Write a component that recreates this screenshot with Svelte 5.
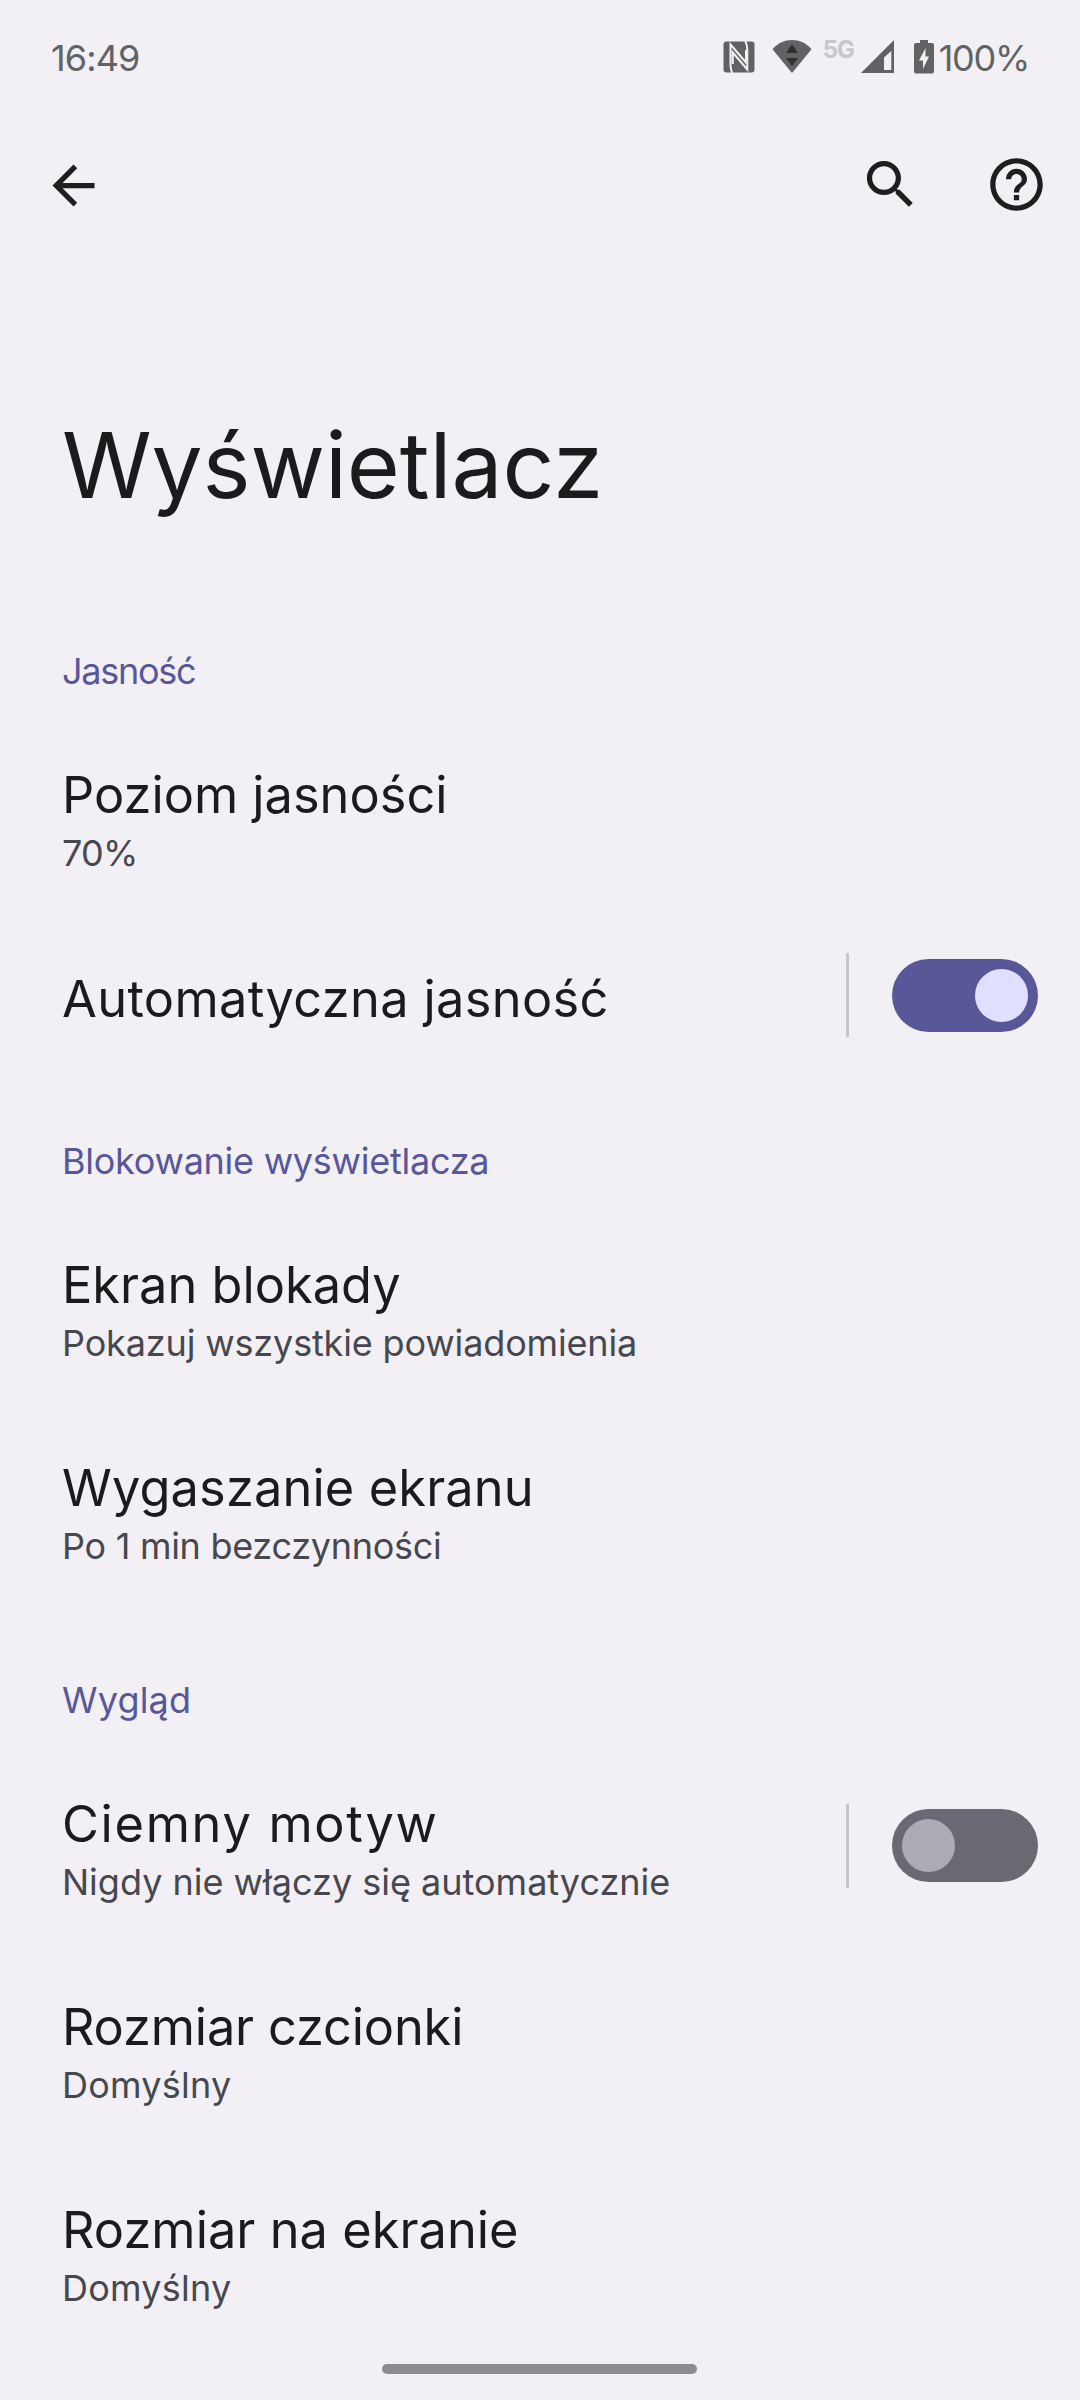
<script lang="ts">
	type Item = {
		title: string;
		titleSpacing?: number;
		summary?: string;
		summarySpacing?: number;
		toggle?: boolean;
		checked?: boolean;
	};

	type Group = {
		name: string;
		spacing: number;
		items: Item[];
	};

	let groups: Group[] = [
		{
			name: 'Jasność',
			spacing: -1.27,
			items: [
				{ title: 'Poziom jasności', summary: '70%', summarySpacing: -0.7 },
				{ title: 'Automatyczna jasność', titleSpacing: 0.35, toggle: true, checked: true }
			]
		},
		{
			name: 'Blokowanie wyświetlacza',
			spacing: -0.26,
			items: [
				{
					title: 'Ekran blokady',
					summary: 'Pokazuj wszystkie powiadomienia',
					summarySpacing: -0.15
				},
				{
					title: 'Wygaszanie ekranu',
					titleSpacing: 0.15,
					summary: 'Po 1 min bezczynności',
					summarySpacing: -0.28
				}
			]
		},
		{
			name: 'Wygląd',
			spacing: 0.2,
			items: [
				{
					title: 'Ciemny motyw',
					titleSpacing: 1.7,
					summary: 'Nigdy nie włączy się automatycznie',
					toggle: true,
					checked: false
				},
				{
					title: 'Rozmiar czcionki',
					titleSpacing: -0.15,
					summary: 'Domyślny',
					summarySpacing: 0.25
				},
				{
					title: 'Rozmiar na ekranie',
					titleSpacing: 0.05,
					summary: 'Domyślny',
					summarySpacing: 0.25
				}
			]
		}
	];

	const toggleItem = (item: Item) => {
		item.checked = !item.checked;
		groups = groups;
	};
</script>

<div class="screen">
	<div class="status-bar">
		<span class="clock">16:49</span>
		<div class="status-icons">
			<svg class="nfc" width="32" height="32" viewBox="0 0 32 32">
				<rect x="0.5" y="0.5" width="31" height="31" rx="3" fill="#626264" />
				<path
					d="M9.500 32C7.200 29 7.500 24 7.500 19V3.500L23 21.500V9M22 0C24.600 3 24.300 8 24.300 13V28.500L9.800 11.500V23"
					fill="none"
					stroke="#f2f0f4"
					stroke-width="2"
				/>
			</svg>
			<svg class="wifi" width="40" height="34" viewBox="0 0 40 34">
				<path d="M0.500 9.300C11-3 29-3 39.500 9.300L20 33Z" fill="#626264" />
				<path d="M20 4.500L26 13H14ZM14 18H26L20 26Z" fill="#2f2f30" />
			</svg>
			<span class="network">5G</span>
			<svg class="signal" width="34" height="34" viewBox="0 0 34 34">
				<path d="M33 0V33H0ZM30.300 11L23 17.500V30H30.300Z" fill="#626264" fill-rule="evenodd" />
			</svg>
			<svg class="battery" width="20" height="34" viewBox="0 0 20 34">
				<path
					d="M6 0H14V3H18Q20 3 20 5V31.500Q20 33.500 18 33.500H2Q0 33.500 0 31.500V5Q0 3 2 3H6Z"
					fill="#626264"
				/>
				<path d="M11.500 8L5 20.500H9V29L15 16.500H11.500Z" fill="#f2f0f4" />
			</svg>
			<span class="percent">100%</span>
		</div>
	</div>

	<div class="toolbar">
		<button class="back" aria-label="Wstecz">
			<svg viewBox="0 0 24 24">
				<path d="M20 11H7.830l5.590-5.590L12 4l-8 8 8 8 1.410-1.410L7.830 13H20v-2z" />
			</svg>
		</button>
		<div class="actions">
			<button aria-label="Szukaj">
				<svg viewBox="0 0 24 24">
					<path
						d="M15.500 14h-.790l-.280-.270C15.410 12.590 16 11.110 16 9.500 16 5.910 13.090 3 9.500 3S3 5.910 3 9.500 5.910 16 9.500 16c1.610 0 3.090-.590 4.230-1.570l.270.280v.790l5 4.990L20.490 19l-4.990-5zm-6 0C7.010 14 5 11.990 5 9.500S7.010 5 9.500 5 14 7.010 14 9.500 11.990 14 9.500 14z"
					/>
				</svg>
			</button>
			<button aria-label="Pomoc">
				<svg viewBox="0 0 24 24">
					<path
						d="M11 18h2v-2h-2v2zm1-16C6.480 2 2 6.480 2 12s4.480 10 10 10 10-4.480 10-10S17.520 2 12 2zm0 18c-4.410 0-8-3.590-8-8s3.590-8 8-8 8 3.590 8 8-3.590 8-8 8zm0-14c-2.210 0-4 1.790-4 4h2c0-1.100.900-2 2-2s2 .900 2 2c0 2-3 1.750-3 5h2c0-2.250 3-2.500 3-5 0-2.210-1.790-4-4-4z"
					/>
				</svg>
			</button>
		</div>
	</div>

	<h1>Wyświetlacz</h1>

	{#each groups as group}
		<section>
			<h2 style="letter-spacing: {group.spacing}px">{group.name}</h2>
			{#each group.items as item}
				<div class="item">
					<div class="text">
						<div class="title" style="letter-spacing: {item.titleSpacing ?? 0}px">{item.title}</div>
						{#if item.summary}
							<div class="summary" style="letter-spacing: {item.summarySpacing ?? 0}px">
								{item.summary}
							</div>
						{/if}
					</div>
					{#if item.toggle}
						<div class="divider"></div>
						<button
							class="switch"
							class:is-on={item.checked}
							role="switch"
							aria-checked={item.checked}
							aria-label={item.title}
							on:click={() => toggleItem(item)}
						>
							<span class="thumb"></span>
						</button>
					{/if}
				</div>
			{/each}
		</section>
	{/each}

	<div class="nav-handle"></div>
</div>

<style>
	:global(body) {
		background: #f2f0f4;
	}

	.screen {
		position: relative;
		box-sizing: border-box;
		width: 1080px;
		height: 2400px;
		overflow: hidden;
		background: #f2f0f4;
		color: #1b1b1d;
		font-family: Inter, 'Noto Sans', sans-serif;
	}

	button {
		display: block;
		padding: 0;
		border: none;
		background: none;
		cursor: pointer;
	}

	.status-bar {
		display: flex;
		justify-content: space-between;
		height: 118px;
		padding: 0 51px 0 51px;
		box-sizing: border-box;
		color: #626264;
		font-size: 36px;
		line-height: 116px;
	}

	.clock {
		letter-spacing: -0.9px;
	}

	.status-icons {
		display: flex;
		align-items: flex-start;
	}

	.status-icons svg {
		flex: none;
		margin-top: 40px;
	}

	.status-icons .nfc {
		margin: 41px 17px 0 0;
	}

	.network {
		width: 32px;
		margin: 41px 6px 0 11px;
		color: #c7c6c9;
		font-size: 24px;
		font-weight: 700;
		letter-spacing: -1px;
		line-height: 18px;
	}

	.battery {
		margin-left: 19px;
	}

	.percent {
		margin-left: 5px;
		letter-spacing: -1.3px;
	}

	.toolbar {
		display: flex;
		align-items: flex-start;
		justify-content: space-between;
		height: 264px;
		padding: 35px 32px 0 42px;
		box-sizing: border-box;
	}

	.toolbar svg {
		display: block;
		width: 63px;
		height: 63px;
		fill: #1e1e1f;
	}

	.back {
		margin-top: 1px;
	}

	.actions {
		display: flex;
		gap: 63px;
	}

	h1 {
		margin: 0;
		padding: 28px 62px 62px;
		font-size: 91px;
		font-weight: 400;
		letter-spacing: -0.1px;
		line-height: 110px;
	}

	h2 {
		height: 133px;
		margin: 0;
		padding: 65px 62px 0;
		box-sizing: border-box;
		color: #57579a;
		font-size: 36px;
		font-weight: 400;
		line-height: 48px;
	}

	.item {
		display: flex;
		align-items: center;
		min-height: 154px;
		padding-right: 42px;
	}

	.text {
		flex: 1;
		padding: 46px 0 40px 62px;
	}

	.title {
		font-size: 50.5px;
		line-height: 67px;
	}

	.summary {
		color: #47474f;
		font-size: 36px;
		line-height: 50px;
	}

	.divider {
		width: 3px;
		height: 84px;
		margin-right: 43px;
		background: #c7c5c9;
	}

	.switch {
		display: flex;
		align-items: center;
		width: 146px;
		height: 73px;
		padding: 0 10px;
		border-radius: 37px;
		background: #6a6872;
	}

	.thumb {
		width: 53px;
		height: 53px;
		border-radius: 50%;
		background: #acaab4;
	}

	.switch.is-on {
		justify-content: flex-end;
		background: #585899;
	}

	.switch.is-on .thumb {
		background: #e1dfff;
	}

	.nav-handle {
		position: absolute;
		bottom: 26px;
		left: 382px;
		width: 315px;
		height: 10px;
		border-radius: 5px;
		background: #8d8b8e;
	}
</style>
